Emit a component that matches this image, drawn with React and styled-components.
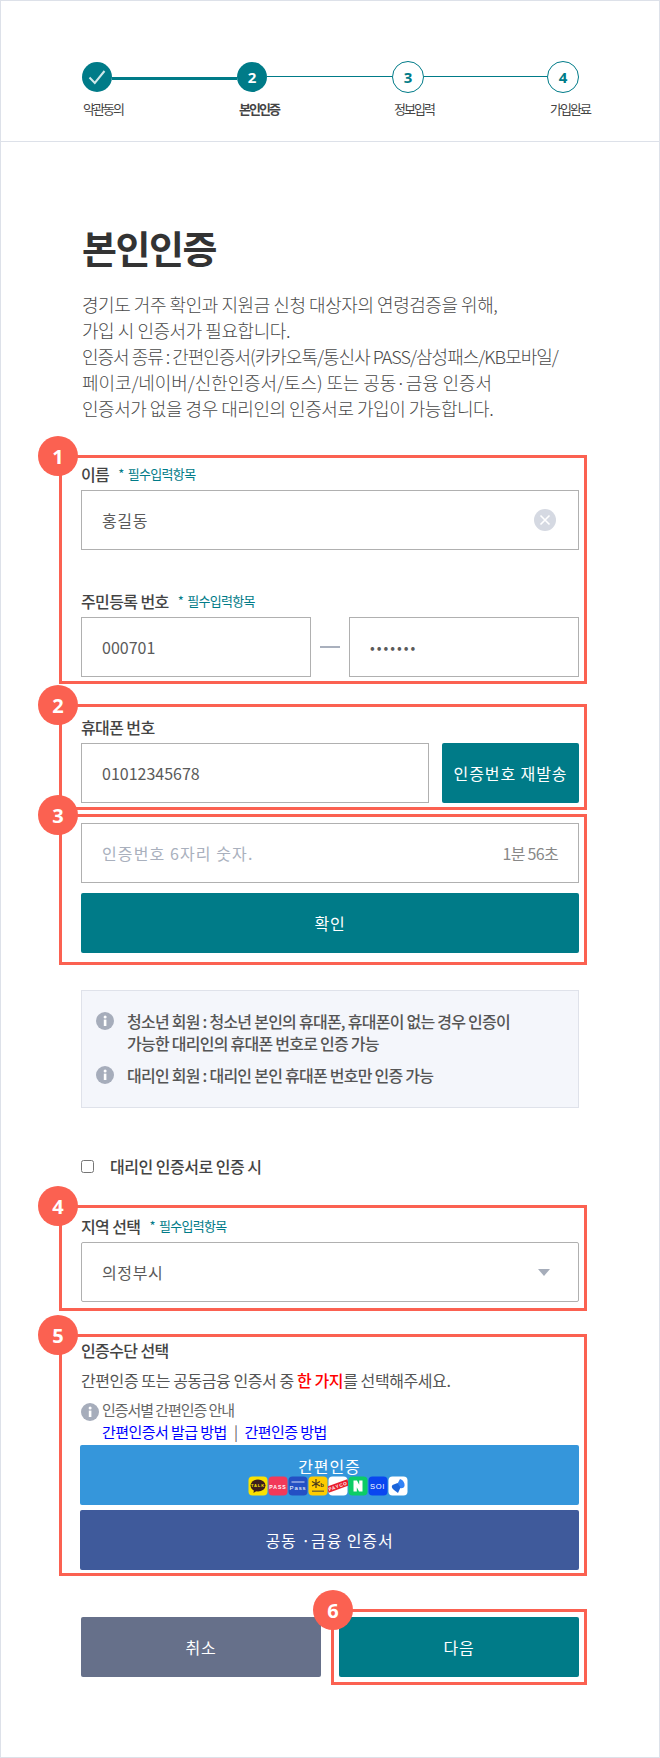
import styled, { createGlobalStyle } from "styled-components";

const TEAL = "#007b88";
const RED = "#fb6151";
const FONT = `"Noto Sans CJK KR", "Noto Sans", sans-serif`;

const GlobalStyle = createGlobalStyle`
  * { box-sizing: border-box; }
  html, body { margin: 0; padding: 0; background: #fff; }
  body { font-family: ${FONT}; color: #333; }
`;

const Page = styled.div`
  width: 660px;
  height: 1758px;
  border: 1px solid #dde1e9;
  overflow: hidden;
`;

const StepHeader = styled.header`
  height: 141px;
  padding: 60px 0 0 81px;
  border-bottom: 1px solid #dde1e9;
  display: flex;
`;

const Step = styled.div`
  width: ${(p) => (p.$last ? "32px" : "155px")};
  flex: none;
`;

const StepTrack = styled.div`
  display: flex;
  align-items: center;
  height: 32px;
`;

const StepCircle = styled.div`
  width: ${(p) => (p.$todo ? "32px" : "30px")};
  height: ${(p) => (p.$todo ? "32px" : "30px")};
  border-radius: 50%;
  flex: none;
  display: flex;
  align-items: center;
  justify-content: center;
  font: 700 15px "Open Sans", sans-serif;
  background: ${(p) => (p.$todo ? "#fff" : TEAL)};
  color: ${(p) => (p.$todo ? TEAL : "#fff")};
  border: ${(p) => (p.$todo ? `1px solid ${TEAL}` : "none")};
`;

const StepLine = styled.div`
  flex: 1;
  height: ${(p) => (p.$done ? "3px" : "1px")};
  background: ${TEAL};
  margin-top: ${(p) => (p.$done ? "2px" : "-1px")};
`;

const StepName = styled.div`
  margin: 6px 0 0 ${(p) => p.$indent}px;
  font-size: 13px;
  line-height: 20px;
  letter-spacing: -2px;
  white-space: nowrap;
  color: #444;
  font-weight: ${(p) => (p.$active ? 700 : 400)};
`;

const Main = styled.main`
  padding-left: 58px;
  width: 586px;
`;

const Title = styled.h1`
  margin: 82px 0 0 23px;
  font-size: 38px;
  line-height: 46px;
  font-weight: 700;
  letter-spacing: -1.5px;
  color: #333;
`;

const Intro = styled.div`
  margin: 21px 0 34px 23px;
  font-size: 18px;
  line-height: 26px;
  font-weight: 300;
  color: #4a4a4a;
  white-space: nowrap;
`;

const IntroLine = styled.div`
  letter-spacing: ${(p) => p.$spacing}px;
`;

const Marked = styled.section`
  position: relative;
  border: 3px solid ${RED};
  padding: ${(p) => p.$pad || "4px 5px 4px 19px"};
  margin-top: ${(p) => p.$top || 0}px;
`;

const Badge = styled.span`
  position: absolute;
  left: ${(p) => p.$left ?? -24}px;
  top: -22px;
  width: 40px;
  height: 40px;
  border-radius: 50%;
  background: ${RED};
  color: #fff;
  font: 700 20px "Open Sans", sans-serif;
  display: flex;
  align-items: center;
  justify-content: center;
`;

const LabelRow = styled.div`
  display: flex;
  align-items: center;
  height: 24px;
  padding-bottom: 1px;
  margin-bottom: 4px;
  margin-top: ${(p) => p.$top || 0}px;
`;

const Label = styled.span`
  font-size: 16px;
  font-weight: 500;
  color: #444;
  letter-spacing: -0.6px;
`;

const Required = styled.span`
  margin-left: 9px;
  font-size: 13px;
  color: ${TEAL};
  letter-spacing: -0.7px;
  word-spacing: 2px;
`;

const Field = styled.div`
  height: 60px;
  flex: ${(p) => (p.$grow ? 1 : "none")};
  width: ${(p) => (p.$width ? `${p.$width}px` : "auto")};
  border: 1px solid #b0b0b0;
  border-radius: ${(p) => (p.$round ? "2px" : 0)};
  padding: 0 20px;
  display: flex;
  align-items: center;
  justify-content: space-between;
  font-size: 16px;
  color: #5a5a5a;
  letter-spacing: ${(p) => (p.$spaced ? "0.6px" : 0)};
`;

const Dots = styled.span`
  font-size: 14px;
  letter-spacing: 2px;
`;

const Placeholder = styled.span`
  color: #a9b0bd;
  letter-spacing: 1.1px;
`;

const Timer = styled.span`
  color: #888;
  letter-spacing: -0.7px;
`;

const Row = styled.div`
  display: flex;
  align-items: center;
  gap: ${(p) => p.$gap || 0}px;
`;

const Dash = styled.span`
  width: 20px;
  height: 2px;
  background: #a9b0bd;
  margin: 0 9px;
  flex: none;
`;

const Button = styled.button`
  display: flex;
  flex-direction: column;
  align-items: center;
  justify-content: center;
  width: ${(p) => (p.$width ? `${p.$width}px` : "100%")};
  height: 60px;
  flex: none;
  border: 0;
  border-radius: 2px;
  padding: 0;
  margin-top: ${(p) => p.$top || 0}px;
  background: ${(p) => p.$bg || TEAL};
  color: #fff;
  font-family: ${FONT};
  font-size: 16px;
  letter-spacing: 0.9px;
  white-space: nowrap;
`;

const InfoBox = styled.div`
  margin: 25px 8px 0 22px;
  height: 118px;
  padding: 19px 14px;
  background: #f4f6fb;
  border: 1px solid #dfe2ea;
  display: flex;
  flex-direction: column;
  gap: 10px;
`;

const InfoItem = styled.div`
  display: flex;
  gap: 13px;
  font-size: 16px;
  line-height: 22px;
  font-weight: 500;
  letter-spacing: -0.75px;
  color: #555;
  white-space: nowrap;
`;

const InfoMark = styled.svg`
  flex: none;
  width: 18px;
  height: 18px;
  margin-top: 2px;
`;

const CheckRow = styled.label`
  display: flex;
  align-items: center;
  height: 22px;
  margin: 47px 0 28px 22px;
  font-size: 16px;
  font-weight: 500;
  letter-spacing: -0.5px;
  color: #444;

  input {
    width: 13px;
    height: 13px;
    margin: 0 16px 0 0;
  }
`;

const SelectArrow = styled.span`
  width: 0;
  height: 0;
  border-left: 6px solid transparent;
  border-right: 6px solid transparent;
  border-top: 7px solid #a6adba;
  margin-right: 8px;
`;

const Guide = styled.p`
  margin: 7px 0 8px;
  font-size: 16px;
  line-height: 22px;
  letter-spacing: -0.42px;
  color: #555;
  white-space: nowrap;
`;

const Hot = styled.b`
  color: #f00;
  font-weight: 500;
`;

const HowTo = styled.div`
  display: flex;
  gap: 3px;
  font-size: 15px;
  line-height: 22px;
  letter-spacing: -1.05px;
  color: #666;
`;

const SmallMark = styled(InfoMark)`
  margin-top: 4px;
`;

const Links = styled.div`
  display: flex;
  font-size: 15px;
  line-height: 22px;
  letter-spacing: -0.55px;
  margin: 0 0 2px 21px;
  color: #666;

  a {
    color: #0000ff;
    text-decoration: none;
  }
`;

const Separator = styled.span`
  margin: 0 7px;
`;

const Methods = styled.div`
  margin: 0 0 3px -1px;
  display: flex;
  flex-direction: column;
`;

const ButtonText = styled.span`
  line-height: 22px;
  font-size: 16px;
`;

const Brands = styled.div`
  display: flex;
  margin: -1px 0 0 -3px;
`;

const BrandIcon = styled.svg`
  width: 20px;
  height: 20px;
  display: block;
`;

const Footer = styled.div`
  display: flex;
  align-items: center;
  margin: 33px 0 0 22px;
  gap: 10px;
`;

const NextBox = styled(Marked)`
  padding: 5px;
  flex: 1;
`;

const brandFont = { fontFamily: "Liberation Sans, sans-serif", fontWeight: 700 };

function Kakao() {
  return (
    <BrandIcon viewBox="0 0 20 20">
      <rect x="0.5" y="0.5" width="19" height="19" rx="4" fill="#fae100" />
      <ellipse cx="10" cy="9.5" rx="7.5" ry="6" fill="#3c1e1e" />
      <path d="M6 13.5 L5.5 17 L9 14.5 Z" fill="#3c1e1e" />
      <text x="10" y="11" textAnchor="middle" fontSize="4" fill="#fae100" style={brandFont}>TALK</text>
    </BrandIcon>
  );
}

function Pass() {
  return (
    <BrandIcon viewBox="0 0 20 20">
      <rect x="0.5" y="0.5" width="19" height="19" rx="4" fill="#f2395a" />
      <text x="10" y="12.5" textAnchor="middle" fontSize="5.2" fill="#fff" style={brandFont}>PASS</text>
    </BrandIcon>
  );
}

function SamsungPass() {
  return (
    <BrandIcon viewBox="0 0 20 20">
      <rect x="0.5" y="0.5" width="19" height="19" rx="4" fill="#2450c4" />
      <rect x="3.5" y="5.5" width="13" height="1" fill="#cfd9f5" />
      <text x="10" y="13.5" textAnchor="middle" fontSize="6" fill="#fff" fontFamily="Liberation Sans, sans-serif">Pass</text>
    </BrandIcon>
  );
}

function Kb() {
  return (
    <BrandIcon viewBox="0 0 20 20">
      <rect x="0.5" y="0.5" width="19" height="19" rx="4" fill="#ffcc00" />
      <path d="M8 3 V12 M4 5.5 L12 10 M12 5.5 L4 10" stroke="#4a3b1c" strokeWidth="1.2" />
      <text x="14.5" y="11" textAnchor="middle" fontSize="6" fill="#4a3b1c" style={brandFont}>b</text>
      <rect x="4" y="14.5" width="12" height="1.4" fill="#7a6a2a" />
    </BrandIcon>
  );
}

function Payco() {
  return (
    <BrandIcon viewBox="0 0 20 20">
      <rect x="0.5" y="0.5" width="19" height="19" rx="4" fill="#fff" />
      <g transform="rotate(-20 10 10)">
        <rect x="-1" y="6.8" width="22" height="6.4" fill="#e8202e" />
        <text x="10" y="11.8" textAnchor="middle" fontSize="4.6" fill="#fff" style={brandFont}>PAYCO</text>
      </g>
    </BrandIcon>
  );
}

function Naver() {
  return (
    <BrandIcon viewBox="0 0 20 20">
      <rect x="0.5" y="0.5" width="19" height="19" rx="4" fill="#0ccc66" />
      <path d="M5.5 4.5 H9 L11.2 8.8 V4.5 H14.5 V15.5 H11 L8.8 11.2 V15.5 H5.5 Z" fill="#fff" />
    </BrandIcon>
  );
}

function Sol() {
  return (
    <BrandIcon viewBox="0 0 20 20">
      <rect x="0.5" y="0.5" width="19" height="19" rx="4" fill="#0a46f0" />
      <text x="9.5" y="13" textAnchor="middle" fontSize="7.5" fill="#fff" fontFamily="Liberation Sans, sans-serif">SOl</text>
    </BrandIcon>
  );
}

function Toss() {
  return (
    <BrandIcon viewBox="0 0 20 20">
      <rect x="0.5" y="0.5" width="19" height="19" rx="4" fill="#fff" />
      <path d="M12 3 C15 4 17 7 16.5 10 C16 12 14 12.5 12 12 L8 10.5 Z" fill="#3182f6" />
      <path d="M9.5 7 L4.5 9 C3 10.5 4 12.5 6 14 L10 17 L12.5 11.5 Z" fill="#1b64da" />
    </BrandIcon>
  );
}

function Info({ small }) {
  const Mark = small ? SmallMark : InfoMark;
  return (
    <Mark viewBox="0 0 18 18">
      <circle cx="9" cy="9" r="9" fill="#a6adbb" />
      <rect x="7.8" y="7.6" width="2.6" height="6.4" fill="#fff" />
      <circle cx="9.1" cy="5" r="1.5" fill="#fff" />
    </Mark>
  );
}

function ClearIcon() {
  return (
    <svg width="22" height="22" viewBox="0 0 22 22" style={{ marginRight: 2 }}>
      <circle cx="11" cy="11" r="11" fill="#d5d9e2" />
      <path d="M6.5 6.5 L15.5 15.5 M15.5 6.5 L6.5 15.5" stroke="#fff" strokeWidth="1.6" />
    </svg>
  );
}

function CheckIcon() {
  return (
    <svg width="18" height="16" viewBox="0 0 18 16">
      <path d="M1.5 8.5 L6.8 14 L16.5 2" fill="none" stroke="#cfe8ea" strokeWidth="2" />
    </svg>
  );
}

const STEPS = [
  { name: "약관동의", indent: 1 },
  { name: "본인인증", indent: 2, active: true },
  { name: "정보입력", indent: 2, todo: true },
  { name: "가입완료", indent: 3, todo: true },
];

const INTRO_LINES = [
  { text: "경기도 거주 확인과 지원금 신청 대상자의 연령검증을 위해,", spacing: -0.45 },
  { text: "가입 시 인증서가 필요합니다.", spacing: -0.45 },
  { text: "인증서 종류 : 간편인증서(카카오톡/통신사 PASS/삼성패스/KB모바일/", spacing: -1 },
  { text: "페이코/네이버/신한인증서/토스) 또는 공동·금융 인증서", spacing: -0.1 },
  { text: "인증서가 없을 경우 대리인의 인증서로 가입이 가능합니다.", spacing: -0.47 },
];

function Stepper() {
  return (
    <StepHeader>
      {STEPS.map((s, i) => (
        <Step key={s.name} $last={i === 3}>
          <StepTrack>
            <StepCircle $todo={s.todo}>{i === 0 ? <CheckIcon /> : i + 1}</StepCircle>
            {i < 3 && <StepLine $done={i === 0} />}
          </StepTrack>
          <StepName $indent={s.indent} $active={s.active}>{s.name}</StepName>
        </Step>
      ))}
    </StepHeader>
  );
}

function FieldLabel({ text, required, top }) {
  return (
    <LabelRow $top={top}>
      <Label>{text}</Label>
      {required && <Required>* 필수입력항목</Required>}
    </LabelRow>
  );
}

export default function App() {
  return (
    <Page>
      <GlobalStyle />
      <Stepper />
      <Main>
        <Title>본인인증</Title>
        <Intro>
          {INTRO_LINES.map((line) => (
            <IntroLine key={line.text} $spacing={line.spacing}>{line.text}</IntroLine>
          ))}
        </Intro>

        <Marked>
          <Badge>1</Badge>
          <FieldLabel text="이름" required />
          <Field $spaced>
            <span>홍길동</span>
            <ClearIcon />
          </Field>
          <FieldLabel text="주민등록 번호" required top={39} />
          <Row>
            <Field $width={230}>000701</Field>
            <Dash />
            <Field $width={230}><Dots>•••••••</Dots></Field>
          </Row>
        </Marked>

        <Marked $top={20} $pad="8px 5px 4px 19px">
          <Badge>2</Badge>
          <FieldLabel text="휴대폰 번호" />
          <Row $gap={13}>
            <Field $grow>01012345678</Field>
            <Button $width={137}>인증번호 재발송</Button>
          </Row>
        </Marked>

        <Marked $top={4} $pad="6px 5px 9px 19px">
          <Badge>3</Badge>
          <Field>
            <Placeholder>인증번호 6자리 숫자.</Placeholder>
            <Timer>1분 56초</Timer>
          </Field>
          <Button $top={10}>확인</Button>
        </Marked>

        <InfoBox>
          <InfoItem>
            <Info />
            <span>
              청소년 회원 : 청소년 본인의 휴대폰, 휴대폰이 없는 경우 인증이
              <br />
              가능한 대리인의 휴대폰 번호로 인증 가능
            </span>
          </InfoItem>
          <InfoItem>
            <Info />
            <span>대리인 회원 : 대리인 본인 휴대폰 번호만 인증 가능</span>
          </InfoItem>
        </InfoBox>

        <CheckRow>
          <input type="checkbox" />
          대리인 인증서로 인증 시
        </CheckRow>

        <Marked $pad="6px 5px 6px 19px">
          <Badge>4</Badge>
          <FieldLabel text="지역 선택" required />
          <Field $round $spaced>
            <span>의정부시</span>
            <SelectArrow />
          </Field>
        </Marked>

        <Marked $top={23} $pad="1px 5px 0 19px">
          <Badge>5</Badge>
          <FieldLabel text="인증수단 선택" />
          <Guide>
            간편인증 또는 공동금융 인증서 중 <Hot>한 가지</Hot>를 선택해주세요.
          </Guide>
          <HowTo>
            <Info small />
            <span>인증서별 간편인증 안내</span>
          </HowTo>
          <Links>
            <a href="#issue">간편인증서 발급 방법</a>
            <Separator>|</Separator>
            <a href="#how">간편인증 방법</a>
          </Links>
          <Methods>
            <Button $bg="#3596db">
              <ButtonText>간편인증</ButtonText>
              <Brands>
                <Kakao />
                <Pass />
                <SamsungPass />
                <Kb />
                <Payco />
                <Naver />
                <Sol />
                <Toss />
              </Brands>
            </Button>
            <Button $bg="#3f5a9b" $top={5}>공동 ·금융 인증서</Button>
          </Methods>
        </Marked>

        <Footer>
          <Button $bg="#66708a" $width={240}>취소</Button>
          <NextBox>
            <Badge $left={-21}>6</Badge>
            <Button>다음</Button>
          </NextBox>
        </Footer>
      </Main>
    </Page>
  );
}
